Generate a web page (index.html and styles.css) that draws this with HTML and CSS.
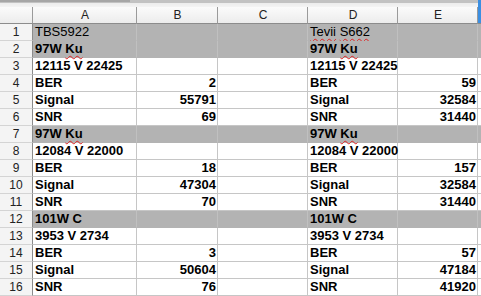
FILE: index.html
```html
<!DOCTYPE html>
<html>
<head>
<meta charset="utf-8">
<link rel="stylesheet" href="styles.css">
</head>
<body>
<div class="top"><div class="thumb"></div></div>
<div class="sheet">
  <div class="row head">
    <div class="c rh"></div>
    <div class="c a">A</div><div class="c b">B</div><div class="c cc">C</div><div class="c d">D</div><div class="c e">E</div><div class="c f"><span class="edge"></span></div>
  </div>
  <div class="row fill">
    <div class="c rh">1</div>
    <div class="c a thin">TBS5922</div><div class="c b"></div><div class="c cc"></div><div class="c d thin"><span class="sp">Tevii</span> <span class="sp">S662</span></div><div class="c e"></div><div class="c f"></div>
  </div>
  <div class="row fill">
    <div class="c rh">2</div>
    <div class="c a">97W <span class="sp">Ku</span></div><div class="c b"></div><div class="c cc"></div><div class="c d">97W <span class="sp">Ku</span></div><div class="c e"></div><div class="c f"></div>
  </div>
  <div class="row">
    <div class="c rh">3</div>
    <div class="c a">12115 V 22425</div><div class="c b"></div><div class="c cc"></div><div class="c d">12115 V 22425</div><div class="c e"></div><div class="c f"></div>
  </div>
  <div class="row">
    <div class="c rh">4</div>
    <div class="c a">BER</div><div class="c b n">2</div><div class="c cc"></div><div class="c d">BER</div><div class="c e n">59</div><div class="c f"></div>
  </div>
  <div class="row">
    <div class="c rh">5</div>
    <div class="c a">Signal</div><div class="c b n">55791</div><div class="c cc"></div><div class="c d">Signal</div><div class="c e n">32584</div><div class="c f"></div>
  </div>
  <div class="row">
    <div class="c rh">6</div>
    <div class="c a">SNR</div><div class="c b n">69</div><div class="c cc"></div><div class="c d">SNR</div><div class="c e n">31440</div><div class="c f"></div>
  </div>
  <div class="row fill">
    <div class="c rh">7</div>
    <div class="c a">97W <span class="sp">Ku</span></div><div class="c b"></div><div class="c cc"></div><div class="c d">97W <span class="sp">Ku</span></div><div class="c e"></div><div class="c f"></div>
  </div>
  <div class="row">
    <div class="c rh">8</div>
    <div class="c a">12084 V 22000</div><div class="c b"></div><div class="c cc"></div><div class="c d">12084 V 22000</div><div class="c e"></div><div class="c f"></div>
  </div>
  <div class="row">
    <div class="c rh">9</div>
    <div class="c a">BER</div><div class="c b n">18</div><div class="c cc"></div><div class="c d">BER</div><div class="c e n">157</div><div class="c f"></div>
  </div>
  <div class="row">
    <div class="c rh">10</div>
    <div class="c a">Signal</div><div class="c b n">47304</div><div class="c cc"></div><div class="c d">Signal</div><div class="c e n">32584</div><div class="c f"></div>
  </div>
  <div class="row">
    <div class="c rh">11</div>
    <div class="c a">SNR</div><div class="c b n">70</div><div class="c cc"></div><div class="c d">SNR</div><div class="c e n">31440</div><div class="c f"></div>
  </div>
  <div class="row fill">
    <div class="c rh">12</div>
    <div class="c a">101W C</div><div class="c b"></div><div class="c cc"></div><div class="c d">101W C</div><div class="c e"></div><div class="c f"></div>
  </div>
  <div class="row">
    <div class="c rh">13</div>
    <div class="c a">3953 V 2734</div><div class="c b"></div><div class="c cc"></div><div class="c d">3953 V 2734</div><div class="c e"></div><div class="c f"></div>
  </div>
  <div class="row">
    <div class="c rh">14</div>
    <div class="c a">BER</div><div class="c b n">3</div><div class="c cc"></div><div class="c d">BER</div><div class="c e n">57</div><div class="c f"></div>
  </div>
  <div class="row">
    <div class="c rh">15</div>
    <div class="c a">Signal</div><div class="c b n">50604</div><div class="c cc"></div><div class="c d">Signal</div><div class="c e n">47184</div><div class="c f"></div>
  </div>
  <div class="row">
    <div class="c rh">16</div>
    <div class="c a">SNR</div><div class="c b n">76</div><div class="c cc"></div><div class="c d">SNR</div><div class="c e n">41920</div><div class="c f"></div>
  </div>
</div>
</body>
</html>
```
FILE: styles.css
```css
html, body {
  margin: 0;
  padding: 0;
  background: #ffffff;
  overflow: hidden;
}
body {
  width: 481px;
  height: 296px;
  font-family: "Liberation Sans", Arial, sans-serif;
}
.top {
  height: 7px;
  background: linear-gradient(#c2c2c2 0, #c2c2c2 3px, #ececec 3px, #f4f4f4 7px);
  display: flex;
}
.thumb {
  width: 130px;
  height: 2px;
  background: #a6a6a6;
}
.sheet {
  display: flex;
  flex-direction: column;
}
.row {
  display: flex;
  height: 17px;
}
.c {
  box-sizing: border-box;
  height: 17px;
  border-right: 1px solid #c6c6c6;
  border-bottom: 1px solid #c6c6c6;
  font-size: 13px;
  font-weight: bold;
  line-height: 16px;
  color: #000;
  padding: 0 1px 0 2px;
  white-space: nowrap;
  overflow: visible;
  flex: none;
}
.rh {
  width: 33px;
  background: #f4f4f4;
  border-right: 1px solid #8c8c8c;
  border-bottom: 1px solid #d4d4d4;
  font-weight: normal;
  font-size: 12px;
  color: #222;
  text-align: center;
  padding: 0;
}
.a { width: 104px; }
.b { width: 81px; }
.cc { width: 90px; }
.d { width: 90px; }
.e { width: 80px; }
.f { flex: 1; border-right: none; position: relative; }
.n { text-align: right; }
.thin { font-weight: normal; }
.fill .c:not(.rh) { background: #b3b3b3; }
.fill .c { border-bottom-color: #b3b3b3; }
.fill .rh { border-bottom-color: #d4d4d4; }
.fill .b, .fill .cc, .fill .a, .fill .d, .fill .e { border-right-color: #c0c0c0; }
.head .c {
  background: linear-gradient(#fbfbfb, #ececec);
  border-right: 1px solid #9a9a9a;
  border-bottom: 1px solid #8c8c8c;
  font-weight: normal;
  font-size: 12px;
  color: #222;
  text-align: center;
}
.head .f { border-right: none; }
.edge {
  position: absolute;
  left: 0;
  top: -7px;
  width: 4px;
  height: 23px;
  background: #3b8fe2;
}
.sp {
  text-decoration: underline wavy #e02020;
  text-decoration-thickness: 1px;
  text-underline-offset: 2px;
}
```
